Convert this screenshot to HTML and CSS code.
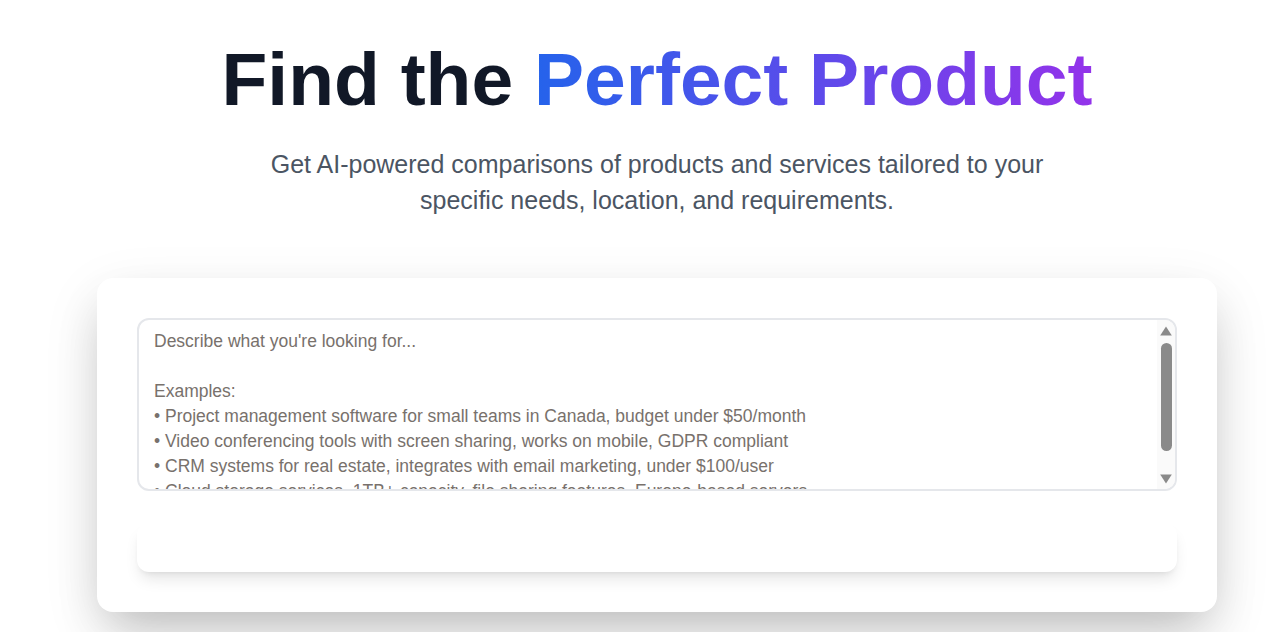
FILE: index.html
```html
<!DOCTYPE html>
<html lang="en">
<head>
<meta charset="utf-8">
<title>Find the Perfect Product</title>
<link rel="stylesheet" href="styles.css">
</head>
<body>
<main class="page">
  <header class="hero">
    <h1 class="title">Find the <span class="grad">Perfect Product</span></h1>
    <p class="subtitle">Get AI-powered comparisons of products and services tailored to your specific needs, location, and requirements.</p>
  </header>
  <section class="card">
    <div class="field">
      <textarea class="query" placeholder="Describe what you're looking for...&#10;&#10;Examples:&#10;• Project management software for small teams in Canada, budget under $50/month&#10;• Video conferencing tools with screen sharing, works on mobile, GDPR compliant&#10;• CRM systems for real estate, integrates with email marketing, under $100/user&#10;• Cloud storage services, 1TB+ capacity, file sharing features, Europe-based servers&#10;• Accounting software for freelancers, invoicing, expense tracking"></textarea>
      <div class="scrollbar" aria-hidden="true">
        <svg class="arrow" width="12" height="10" viewBox="0 0 12 10"><path d="M6 0.5 L11.8 9.5 L0.2 9.5 Z" fill="#8a8a8a"/></svg>
        <div class="track"><div class="thumb"></div></div>
        <svg class="arrow" width="12" height="10" viewBox="0 0 12 10"><path d="M0.2 0.5 L11.8 0.5 L6 9.5 Z" fill="#8a8a8a"/></svg>
      </div>
    </div>
    <button class="submit" type="button"></button>
  </section>
</main>
</body>
</html>
```
FILE: styles.css
```css
html, body {
  margin: 0;
  padding: 0;
  background: #ffffff;
}
body {
  font-family: "Liberation Sans", Arial, sans-serif;
}
.page {
  box-sizing: border-box;
  display: flex;
  flex-direction: column;
  align-items: center;
  padding: 42px 0 21px 38px;
}
.hero {
  display: flex;
  flex-direction: column;
  align-items: center;
  text-align: center;
}
.title {
  margin: 0;
  font-size: 75px;
  line-height: 75px;
  font-weight: 700;
  color: #111827;
}
.grad {
  background: linear-gradient(90deg, #2563eb 0%, #9333ea 100%);
  -webkit-background-clip: text;
  background-clip: text;
  color: transparent;
}
.subtitle {
  margin: 29px 0 0;
  width: 790px;
  font-size: 25px;
  line-height: 36px;
  color: #4b5563;
}
.card {
  margin-top: 60px;
  width: 1040px;
  padding: 40px;
  background: #ffffff;
  border-radius: 16px;
  box-shadow: 0 25px 50px -12px rgba(0, 0, 0, 0.22), 0 18px 60px rgba(0, 0, 0, 0.09);
  display: flex;
  flex-direction: column;
  gap: 32px;
}
.field {
  position: relative;
  height: 173px;
}
.query {
  box-sizing: border-box;
  display: block;
  width: 100%;
  height: 173px;
  margin: 0;
  padding: 9px 22px 0 15px;
  border: 2px solid #e5e7eb;
  border-radius: 12px;
  font-family: "Liberation Sans", Arial, sans-serif;
  font-size: 17.5px;
  line-height: 25px;
  color: #1f2937;
  resize: none;
  outline: none;
  overflow: hidden;
}
.query::placeholder {
  color: #78716c;
}
.scrollbar {
  position: absolute;
  top: 2px;
  right: 2px;
  bottom: 2px;
  width: 18px;
  box-sizing: border-box;
  padding: 6px 3px 5px 3px;
  background: #fafafa;
  border-radius: 0 10px 10px 0;
  display: flex;
  flex-direction: column;
  align-items: center;
  gap: 7px;
}
.arrow {
  flex: none;
  display: block;
}
.track {
  flex: 1;
  width: 11px;
  display: flex;
  flex-direction: column;
}
.thumb {
  height: 108px;
  width: 11px;
  border-radius: 6px;
  background: #8a8a8a;
}
.submit {
  height: 49px;
  border: none;
  border-radius: 12px;
  background: #ffffff;
  box-shadow: 0 10px 15px -3px rgba(0, 0, 0, 0.1), 0 4px 6px -4px rgba(0, 0, 0, 0.1);
}
```
